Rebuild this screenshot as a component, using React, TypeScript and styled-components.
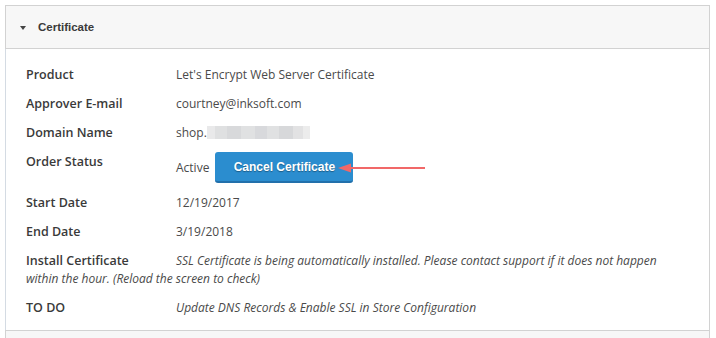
import React from "react";
import styled, { createGlobalStyle } from "styled-components";

const Global = createGlobalStyle`
  html, body { margin: 0; padding: 0; background: #fff; }
  body { font-family: "Open Sans", "Liberation Sans", sans-serif; }
`;

const Page = styled.div`
  padding: 5px 6px 0 5px;
`;

const Panel = styled.section`
  border: 1px solid #d2d2d2;
  border-bottom: none;
  background: #fff;
`;

const PanelHeader = styled.div`
  height: 42px;
  background: #f7f7f7;
  border-bottom: 1px solid #d2d2d2;
  display: flex;
  align-items: center;
  padding-left: 14px;
  gap: 12px;
  font-family: "Liberation Sans", Arial, sans-serif;
  font-weight: bold;
  font-size: 11.5px;
  color: #3a3a3a;
`;

const Caret = styled.span`
  width: 0;
  height: 0;
  border-left: 3.5px solid transparent;
  border-right: 3.5px solid transparent;
  border-top: 4px solid #444;
  margin-top: 1px;
`;

const Body = styled.div`
  display: flex;
  flex-direction: column;
  gap: 11px;
  padding: 17px 20px 13px 20px;
  border-left: 1px solid #d4dbe3;
  margin-left: -1px;
  font-size: 12px;
  line-height: 18px;
  color: #4a4a4a;
`;

const Row = styled.div`
  display: block;
`;

const FlexRow = styled.div`
  display: flex;
  align-items: flex-start;
`;

const Label = styled.span`
  display: inline-block;
  width: 150px;
  flex-shrink: 0;
  font-weight: 600;
  font-size: 12.5px;
  color: #3a3a3a;
`;

const Value = styled.span<{ $italic?: boolean }>`
  font-style: ${(p) => (p.$italic ? "italic" : "normal")};
`;

const Blur = styled.span`
  display: inline-block;
  width: 103px;
  height: 13px;
  vertical-align: -2px;
  background: linear-gradient(
    90deg,
    #e9e9ea 0 8px,
    #dfe0e1 8px 20px,
    #d8d9db 20px 34px,
    #e0e1e2 34px 48px,
    #d8d9dc 48px 60px,
    #e0e1e2 60px 72px,
    #d7d8da 72px 86px,
    #e2e2e3 86px 96px,
    #ececec 96px 103px
  );
`;

const StatusValue = styled.div`
  position: relative;
  display: flex;
  align-items: center;
  gap: 6px;
  margin-top: -1px;
`;

const Button = styled.button`
  height: 31px;
  width: 138px;
  padding: 0;
  border: none;
  border-bottom: 2px solid #2270ab;
  border-radius: 3px;
  background: #2b8dcf;
  color: #fff;
  font-family: "Liberation Sans", Arial, sans-serif;
  font-weight: bold;
  font-size: 12px;
  text-shadow: 0 1px 1px rgba(0, 0, 0, 0.35);
  cursor: pointer;
`;

const Arrow = styled.svg`
  position: absolute;
  left: 161px;
  top: 9px;
`;

const NextHeader = styled.div`
  height: 8px;
  background: #f7f7f7;
  border-top: 1px solid #d2d2d2;
`;

export default function App() {
  return (
    <>
      <Global />
      <Page>
        <Panel>
          <PanelHeader>
            <Caret />
            Certificate
          </PanelHeader>
          <Body>
            <Row>
              <Label>Product</Label>
              <Value>Let's Encrypt Web Server Certificate</Value>
            </Row>
            <Row>
              <Label>Approver E-mail</Label>
              <Value>courtney@inksoft.com</Value>
            </Row>
            <Row>
              <Label>Domain Name</Label>
              <Value>
                shop.
                <Blur />
              </Value>
            </Row>
            <FlexRow>
              <Label>Order Status</Label>
              <StatusValue>
                <Value>Active</Value>
                <Button>Cancel Certificate</Button>
                <Arrow width="90" height="14" viewBox="0 0 90 14">
                  <path d="M1 7 L14 2.5 L14 11.5 Z" fill="#f16868" />
                  <line x1="12" y1="7" x2="88" y2="7" stroke="#f16868" strokeWidth="2" />
                </Arrow>
              </StatusValue>
            </FlexRow>
            <Row>
              <Label>Start Date</Label>
              <Value>12/19/2017</Value>
            </Row>
            <Row>
              <Label>End Date</Label>
              <Value>3/19/2018</Value>
            </Row>
            <Row>
              <Label>Install Certificate</Label>
              <Value $italic>
                SSL Certificate is being automatically installed. Please contact support if it does not happen
                within the hour. (Reload the screen to check)
              </Value>
            </Row>
            <Row>
              <Label>TO DO</Label>
              <Value $italic>Update DNS Records &amp; Enable SSL in Store Configuration</Value>
            </Row>
          </Body>
          <NextHeader />
        </Panel>
      </Page>
    </>
  );
}
